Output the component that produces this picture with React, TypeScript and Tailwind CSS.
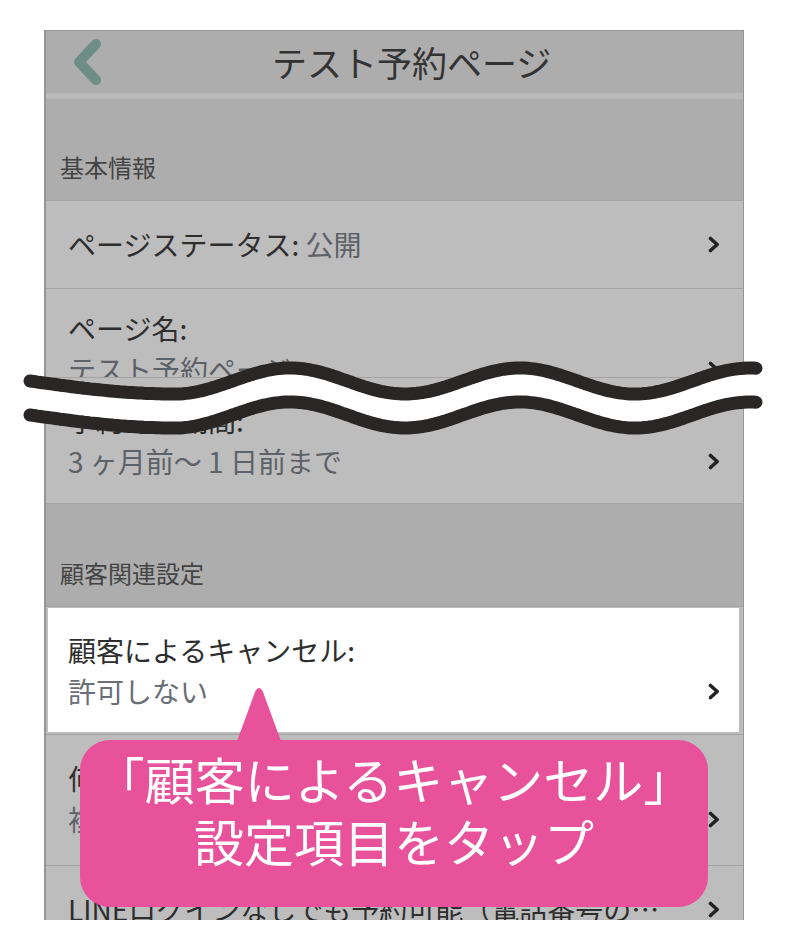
import React from "react";

const FONT = "font-['Noto_Sans_CJK_JP','Noto_Sans',sans-serif]";

function Chevron() {
  return (
    <svg width="12" height="17" viewBox="0 0 12 17" className="shrink-0">
      <path d="M2.5 2.5 L9.2 8.5 L2.5 14.5" fill="none" stroke="#222" strokeWidth="3.6" strokeLinecap="round" strokeLinejoin="round" />
    </svg>
  );
}

type P = [number, number];

function wave(c: number, A = 13, Pd = 230, X0 = 290, x0 = 30, x1 = 756): P[] {
  const pts: P[] = [];
  const firstTrough = X0 - Pd / 2;
  for (let x = x0; x <= x1; x += 3) {
    let y: number;
    if (x < firstTrough) {
      y = c + A * Math.sin((Math.PI / 2) * ((x - x0) / (firstTrough - x0)));
    } else {
      y = c - A * Math.cos((2 * Math.PI * (x - X0)) / Pd);
    }
    pts.push([x, y]);
  }
  return pts;
}

function Wave() {
  const top = wave(381);
  const bot = wave(415);
  const fmt = (p: P[]) => p.map(([x, y]) => `${x.toFixed(1)} ${y.toFixed(1)}`).join(" L");
  const band = "M" + fmt(top) + " L" + fmt([...bot].reverse()) + " Z";
  return (
    <svg className="absolute left-0 top-[340px]" width="788" height="110" viewBox="0 340 788 110">
      <path d={band} fill="#ffffff" />
      <path d={"M" + fmt(top)} fill="none" stroke="#2a2626" strokeWidth="13" strokeLinecap="round" strokeLinejoin="round" />
      <path d={"M" + fmt(bot)} fill="none" stroke="#2a2626" strokeWidth="13" strokeLinecap="round" strokeLinejoin="round" />
    </svg>
  );
}

function Section({ label, h }: { label: string; h: string }) {
  return (
    <div className={`${h} bg-[#adadad] flex items-end pl-[14px] pb-[20px] text-[24px] leading-[26px] text-[#444]`}>
      {label}
    </div>
  );
}

export default function App() {
  return (
    <div className={`relative w-[788px] h-[950px] bg-white overflow-hidden ${FONT}`}>
      <div className="pt-[30px] pl-[44px]">
        <div className="w-[700px] h-[890px] overflow-hidden border-t border-l-2 border-r border-[#959595] bg-[#adadad]">
          {/* header */}
          <div className="h-[62px] flex items-center pl-[26px] bg-[#adadad]">
            <svg width="30" height="46" viewBox="0 0 30 46" className="shrink-0">
              <path d="M24 5 L7 23 L24 41" fill="none" stroke="#6e8d87" strokeWidth="10" strokeLinecap="round" strokeLinejoin="round" />
            </svg>
            <div className="ml-[170px] text-[35px] leading-[40px] text-[#333]">テスト予約ページ</div>
          </div>
          <div className="h-[6px] bg-[#b9b9b9]" />
          <Section label="基本情報" h="h-[101px]" />

          {/* row 1 */}
          <div className="h-[88px] border-t border-[#a3a3a3] bg-[#bdbdbd] flex items-center justify-between pl-[22px] pr-[23px] text-[28px] leading-[41px] text-[#2e2e2e]">
            <div>
              ページステータス: <span className="text-[#5d6168]">公開</span>
            </div>
            <Chevron />
          </div>

          {/* row 2 */}
          <div className="h-[89px] overflow-hidden border-t border-[#a3a3a3] bg-[#bdbdbd] pl-[22px] pr-[23px] pt-[19px] text-[28px] leading-[41px] text-[#2e2e2e]">
            <div>ページ名:</div>
            <div className="flex items-center justify-between">
              <span className="text-[#5d6168]">テスト予約ページ</span>
              <Chevron />
            </div>
          </div>

          {/* row 3 */}
          <div className="h-[126px] border-t border-[#a3a3a3] bg-[#bdbdbd] pl-[22px] pr-[23px] pt-[22px] text-[28px] leading-[41px] text-[#2e2e2e]">
            <div>予約可能期間:</div>
            <div className="flex items-center justify-between">
              <span className="text-[#5d6168]">3 ヶ月前〜 1 日前まで</span>
              <Chevron />
            </div>
          </div>

          <div className="border-t border-[#a3a3a3]">
            <Section label="顧客関連設定" h="h-[102px]" />
          </div>

          {/* row 4 (highlighted) */}
          <div className="border-t border-[#a3a3a3] bg-[#bdbdbd] pt-[1px] pb-[2px] pl-[2px] pr-[4px]">
            <div className="h-[124px] bg-white pl-[20px] pr-[19px] pt-[22px] text-[28px] leading-[41px] text-[#2e2e2e]">
              <div>顧客によるキャンセル:</div>
              <div className="flex items-center justify-between">
                <span className="text-[#6a6e77]">許可しない</span>
                <Chevron />
              </div>
            </div>
          </div>

          {/* row 5 */}
          <div className="h-[131px] border-t border-[#a3a3a3] bg-[#bdbdbd] pl-[22px] pr-[23px] pt-[23px] text-[28px] leading-[41px] text-[#2e2e2e]">
            <div>何日前までキャンセル可能:</div>
            <div className="flex items-center justify-between">
              <span className="text-[#5d6168]">複数回のキャンセル</span>
              <Chevron />
            </div>
          </div>

          {/* row 6 */}
          <div className="h-[88px] border-t border-[#a3a3a3] bg-[#bdbdbd] flex items-center justify-between gap-[40px] pl-[22px] pr-[23px] text-[28px] leading-[41px] text-[#2e2e2e]">
            <div className="truncate">LINEログインなしでも予約可能（電話番号の入力が必要）</div>
            <Chevron />
          </div>
        </div>
      </div>

      <Wave />

      {/* callout tail */}
      <svg className="absolute left-[220px] top-[684px]" width="80" height="62" viewBox="220 684 80 62">
        <path d="M236 744 L255 692 Q259 684 263 692 L282 744 Z" fill="#e8529b" />
      </svg>
      {/* callout */}
      <div className="absolute left-[80px] top-[740px] w-[628px] h-[167px] rounded-[30px] bg-[#e8529b] pt-[7px] text-center text-white text-[50px] leading-[62px]">
        <div>「顧客によるキャンセル」</div>
        <div>設定項目をタップ</div>
      </div>
    </div>
  );
}
